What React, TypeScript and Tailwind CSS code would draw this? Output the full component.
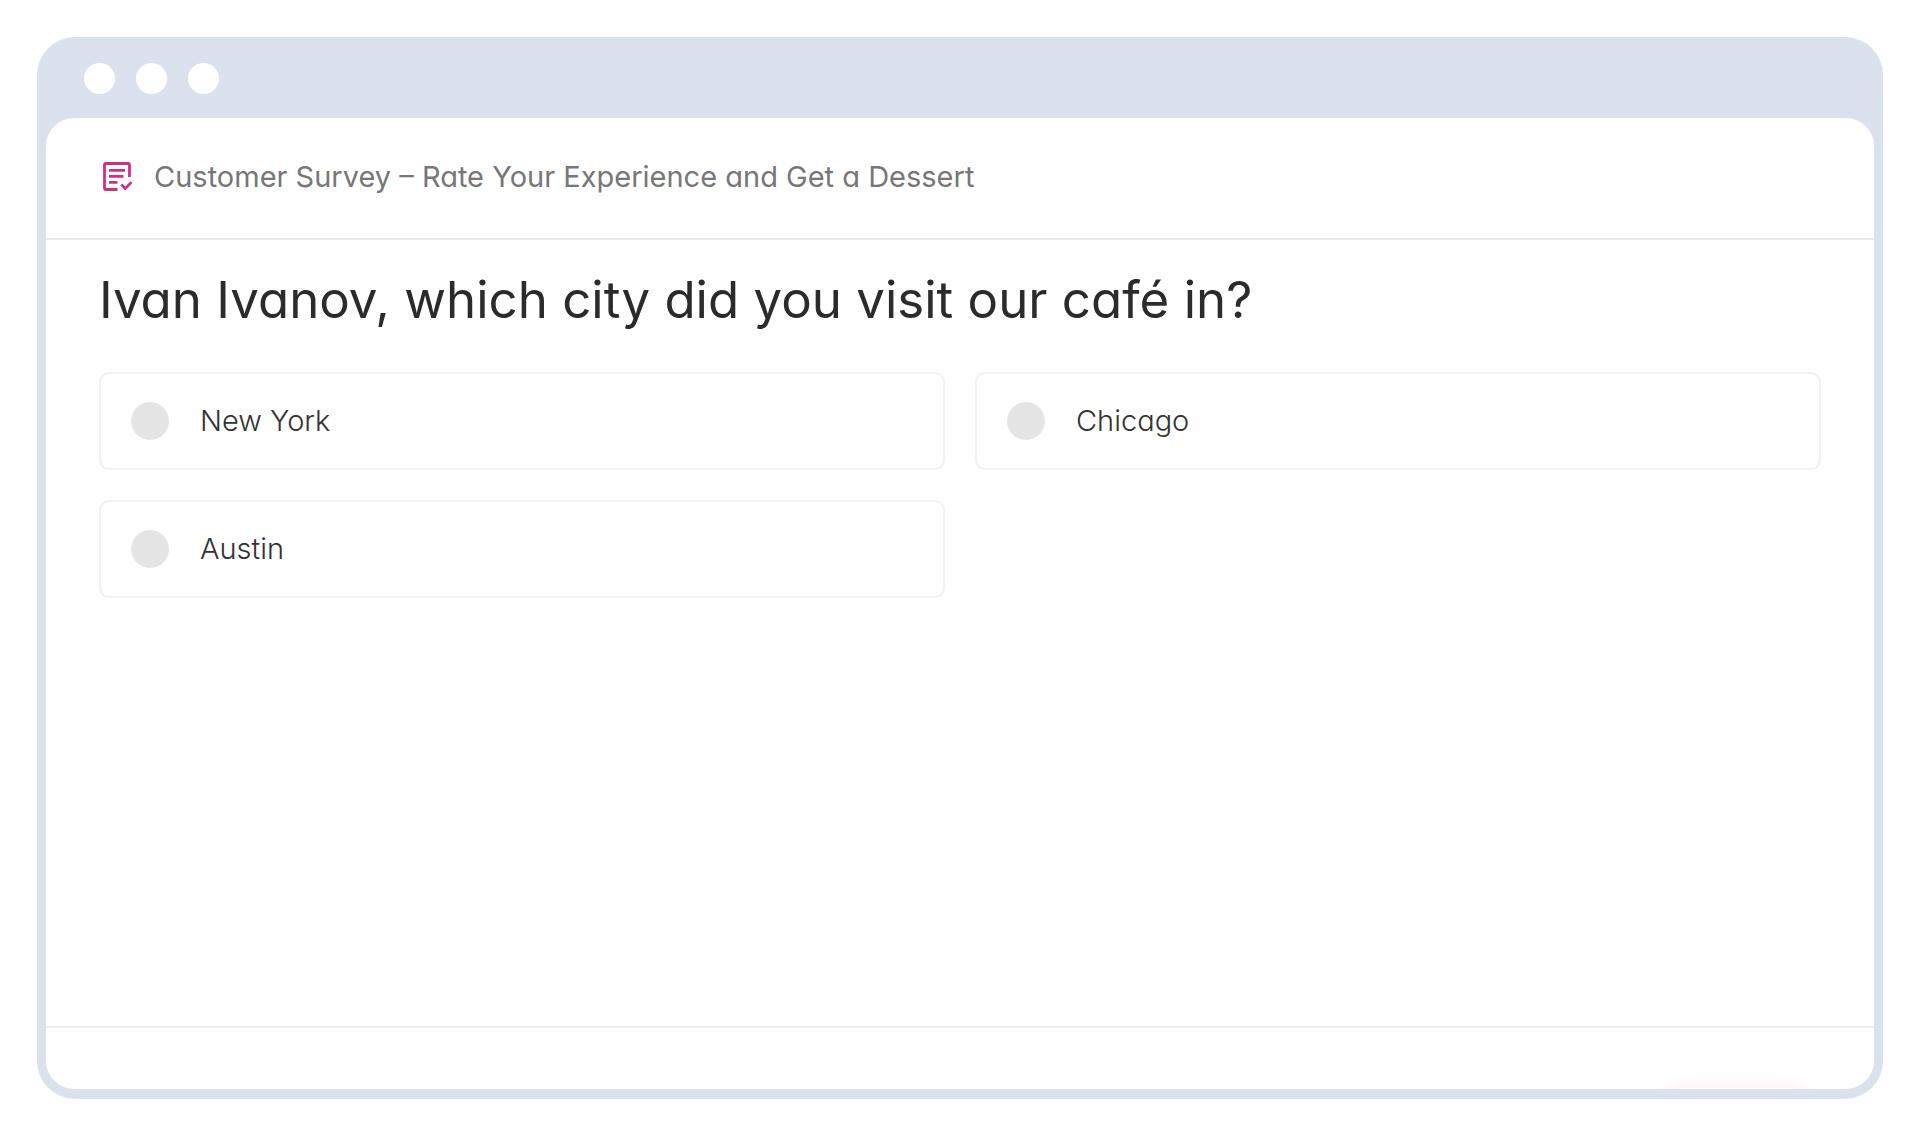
import { useState } from "react";

const cities = ["New York", "Chicago", "Austin"];

function SurveyIcon() {
  return (
    <svg
      className="h-[30px] w-[30px] shrink-0 text-[#d02f83]"
      viewBox="0 0 30 30"
      fill="none"
      stroke="currentColor"
      strokeWidth="2.8"
      aria-hidden="true"
    >
      <path d="M15.500 27.500H4a1.500 1.500 0 0 1-1.500-1.500V3a1.500 1.500 0 0 1 1.500-1.500h22a1.500 1.500 0 0 1 1.500 1.500V15" />
      <path d="M7 8.300h16M7 14.300h14.500M7 20.300h8.500" />
      <path d="M19.300 22.600l4 4 6.200-6.500" />
    </svg>
  );
}

interface CityOptionProps {
  city: string;
  checked: boolean;
  onSelect: (city: string) => void;
}

function CityOption({ city, checked, onSelect }: CityOptionProps) {
  return (
    <label className="flex h-[98px] cursor-pointer items-center gap-[31px] rounded-[10px] border-2 border-[#f1f1f1] px-[30px]">
      <input
        type="radio"
        name="city"
        value={city}
        checked={checked}
        onChange={() => onSelect(city)}
        className="h-[38px] w-[38px] shrink-0 cursor-pointer appearance-none rounded-full bg-[#e5e5e5] checked:bg-[#cb2a7d]"
      />
      <span className="text-[29px] leading-10 font-light text-[#333333]">
        {city}
      </span>
    </label>
  );
}

export default function App() {
  const [selected, setSelected] = useState("");

  return (
    <div className="flex min-h-screen flex-col bg-white px-[37px] pt-[37px] pb-[34px] font-['Inter',sans-serif] [font-feature-settings:'cv11']">
      <div className="flex grow flex-col rounded-[38px] bg-[#dbe1ed] px-[9px] pb-[10px]">
        <div className="flex h-[81px] items-center gap-[21px] px-[38px] pt-[2px]">
          <span className="h-[31px] w-[31px] rounded-full bg-white" />
          <span className="h-[31px] w-[31px] rounded-full bg-white" />
          <span className="h-[31px] w-[31px] rounded-full bg-white" />
        </div>

        <div className="flex grow flex-col overflow-hidden rounded-[28px] bg-white">
          <header className="flex h-[122px] items-center gap-[22px] border-b-2 border-[#e9e9ea] px-14 pb-[2px]">
            <SurveyIcon />
            <p className="text-[29px] leading-10 text-[#777777]">
              Customer Survey – Rate Your Experience and Get a Dessert
            </p>
          </header>

          <main className="grow px-[53px] pt-7">
            <fieldset>
              <legend className="text-[51px] leading-[64px] text-[#2b2b2b]">
                Ivan Ivanov, which city did you visit our café in?
              </legend>
              <div className="mt-10 grid grid-cols-2 gap-[30px]">
                {cities.map((city) => (
                  <CityOption
                    key={city}
                    city={city}
                    checked={selected === city}
                    onSelect={setSelected}
                  />
                ))}
              </div>
            </fieldset>
          </main>

          <footer className="flex h-[63px] items-end justify-end overflow-hidden border-t-2 border-[#eeeeee] px-20">
            <div className="h-px w-[116px] shadow-[0_10px_20px_6px_#fadbe5]" />
          </footer>
        </div>
      </div>
    </div>
  );
}
